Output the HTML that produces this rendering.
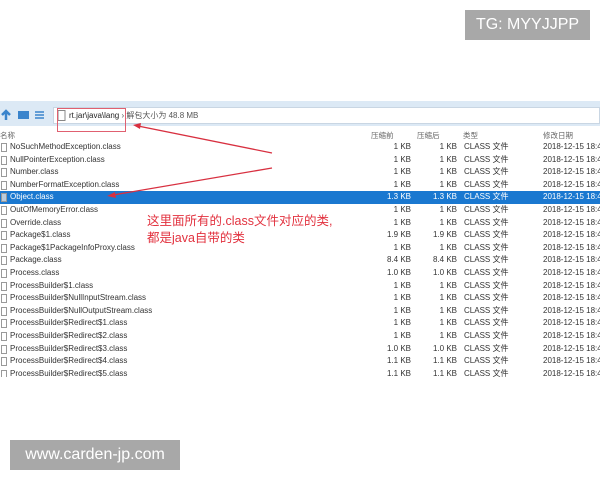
<!DOCTYPE html>
<html><head><meta charset="utf-8"><style>
*{margin:0;padding:0;box-sizing:border-box}
body{width:600px;height:480px;background:#fff;position:relative;overflow:hidden;font-family:"Liberation Sans","Noto Sans CJK SC",sans-serif;color:#333}
.wm{position:absolute;background:#a8a8a8;color:#fff;font-size:16px;display:flex;align-items:center;justify-content:center}
.tb{position:absolute;left:0;top:101px;width:600px;height:25px;background:#dce9f5}
.addr{position:absolute;left:53px;top:107px;width:547px;height:17px;background:#fff;border:1px solid #c9d6e3;font-size:8px;line-height:15px;padding-left:15px;color:#222}
.hdr{position:absolute;top:130px;font-size:7.5px;color:#666}
.row{position:absolute;left:0;width:600px;height:12.6px;font-size:8px;line-height:12.6px;color:#333}
.row .ic{position:absolute;left:1px;top:2px;width:6px;height:9px;border:1px solid #999;background:#fff}
.row .n{position:absolute;left:10px}
.row .a{position:absolute;right:189px}
.row .b{position:absolute;right:143px}
.row .t{position:absolute;left:464px}
.row .d{position:absolute;left:543px;white-space:nowrap}
.sel{background:#1a78d0;color:#fff}
.sel .ic{background:#bcd}
.note{position:absolute;left:147px;top:213px;color:#e2323f;font-size:12.5px;line-height:17px;font-family:"Liberation Sans","Noto Sans CJK SC",sans-serif}
</style></head><body>
<div class="wm" style="left:465px;top:10px;width:125px;height:30px">TG: MYYJJPP</div>
<div class="wm" style="left:10px;top:440px;width:170px;height:30px">www.carden-jp.com</div>
<div class="tb"></div>
<svg style="position:absolute;left:0;top:108px" width="52" height="14">
<path d="M2 7 L6 3 L10 7 M6 3 V12" stroke="#3a84cc" stroke-width="2.5" fill="none"/>
<rect x="18" y="3" width="11" height="8" fill="#3a84cc"/>
<path d="M35 4h9M35 7h9M35 10h9" stroke="#3a84cc" stroke-width="1.5"/>
</svg>
<div class="addr">rt.jar\java\lang <span style="color:#555">› 解包大小为 48.8 MB</span></div>
<svg style="position:absolute;left:57px;top:110px" width="10" height="12"><rect x="1" y="0.5" width="7" height="10" fill="none" stroke="#888"/></svg>
<div class="hdr" style="left:0">名称</div>
<div class="hdr" style="left:371px">压缩前</div>
<div class="hdr" style="left:417px">压缩后</div>
<div class="hdr" style="left:463px">类型</div>
<div class="hdr" style="left:543px">修改日期</div>
<div id="rows"></div>
<div class="row" style="top:141px"><div class="ic"></div><span class="n">NoSuchMethodException.class</span><span class="a">1 KB</span><span class="b">1 KB</span><span class="t">CLASS 文件</span><span class="d">2018-12-15 18:4</span></div>
<div class="row" style="top:153.6px"><div class="ic"></div><span class="n">NullPointerException.class</span><span class="a">1 KB</span><span class="b">1 KB</span><span class="t">CLASS 文件</span><span class="d">2018-12-15 18:4</span></div>
<div class="row" style="top:166.2px"><div class="ic"></div><span class="n">Number.class</span><span class="a">1 KB</span><span class="b">1 KB</span><span class="t">CLASS 文件</span><span class="d">2018-12-15 18:4</span></div>
<div class="row" style="top:178.8px"><div class="ic"></div><span class="n">NumberFormatException.class</span><span class="a">1 KB</span><span class="b">1 KB</span><span class="t">CLASS 文件</span><span class="d">2018-12-15 18:4</span></div>
<div class="row sel" style="top:191.4px"><div class="ic"></div><span class="n">Object.class</span><span class="a">1.3 KB</span><span class="b">1.3 KB</span><span class="t">CLASS 文件</span><span class="d">2018-12-15 18:4</span></div>
<div class="row" style="top:204px"><div class="ic"></div><span class="n">OutOfMemoryError.class</span><span class="a">1 KB</span><span class="b">1 KB</span><span class="t">CLASS 文件</span><span class="d">2018-12-15 18:4</span></div>
<div class="row" style="top:216.6px"><div class="ic"></div><span class="n">Override.class</span><span class="a">1 KB</span><span class="b">1 KB</span><span class="t">CLASS 文件</span><span class="d">2018-12-15 18:4</span></div>
<div class="row" style="top:229.2px"><div class="ic"></div><span class="n">Package$1.class</span><span class="a">1.9 KB</span><span class="b">1.9 KB</span><span class="t">CLASS 文件</span><span class="d">2018-12-15 18:4</span></div>
<div class="row" style="top:241.8px"><div class="ic"></div><span class="n">Package$1PackageInfoProxy.class</span><span class="a">1 KB</span><span class="b">1 KB</span><span class="t">CLASS 文件</span><span class="d">2018-12-15 18:4</span></div>
<div class="row" style="top:254.4px"><div class="ic"></div><span class="n">Package.class</span><span class="a">8.4 KB</span><span class="b">8.4 KB</span><span class="t">CLASS 文件</span><span class="d">2018-12-15 18:4</span></div>
<div class="row" style="top:267px"><div class="ic"></div><span class="n">Process.class</span><span class="a">1.0 KB</span><span class="b">1.0 KB</span><span class="t">CLASS 文件</span><span class="d">2018-12-15 18:4</span></div>
<div class="row" style="top:279.6px"><div class="ic"></div><span class="n">ProcessBuilder$1.class</span><span class="a">1 KB</span><span class="b">1 KB</span><span class="t">CLASS 文件</span><span class="d">2018-12-15 18:4</span></div>
<div class="row" style="top:292.2px"><div class="ic"></div><span class="n">ProcessBuilder$NullInputStream.class</span><span class="a">1 KB</span><span class="b">1 KB</span><span class="t">CLASS 文件</span><span class="d">2018-12-15 18:4</span></div>
<div class="row" style="top:304.8px"><div class="ic"></div><span class="n">ProcessBuilder$NullOutputStream.class</span><span class="a">1 KB</span><span class="b">1 KB</span><span class="t">CLASS 文件</span><span class="d">2018-12-15 18:4</span></div>
<div class="row" style="top:317.4px"><div class="ic"></div><span class="n">ProcessBuilder$Redirect$1.class</span><span class="a">1 KB</span><span class="b">1 KB</span><span class="t">CLASS 文件</span><span class="d">2018-12-15 18:4</span></div>
<div class="row" style="top:330px"><div class="ic"></div><span class="n">ProcessBuilder$Redirect$2.class</span><span class="a">1 KB</span><span class="b">1 KB</span><span class="t">CLASS 文件</span><span class="d">2018-12-15 18:4</span></div>
<div class="row" style="top:342.6px"><div class="ic"></div><span class="n">ProcessBuilder$Redirect$3.class</span><span class="a">1.0 KB</span><span class="b">1.0 KB</span><span class="t">CLASS 文件</span><span class="d">2018-12-15 18:4</span></div>
<div class="row" style="top:355.2px"><div class="ic"></div><span class="n">ProcessBuilder$Redirect$4.class</span><span class="a">1.1 KB</span><span class="b">1.1 KB</span><span class="t">CLASS 文件</span><span class="d">2018-12-15 18:4</span></div>
<div style="position:absolute;left:0;top:367.8px;width:600px;height:9px;overflow:hidden"><div class="row" style="top:0"><div class="ic"></div><span class="n">ProcessBuilder$Redirect$5.class</span><span class="a">1.1 KB</span><span class="b">1.1 KB</span><span class="t">CLASS 文件</span><span class="d">2018-12-15 18:4</span></div></div>
<svg style="position:absolute;left:0;top:0" width="600" height="480">
<rect x="57.5" y="108.5" width="68" height="23" fill="none" stroke="#e06070" stroke-width="1"/>
<line x1="272" y1="153" x2="138" y2="126" stroke="#d83040" stroke-width="1.3"/>
<path d="M133 125 L141 123 L140 129 Z" fill="#d83040"/>
<line x1="272" y1="168" x2="113" y2="195" stroke="#d83040" stroke-width="1.3"/>
<path d="M107 196 L115 192 L116 198 Z" fill="#d83040"/>
</svg>
<div class="note">这里面所有的.class文件对应的类,<br>都是java自带的类</div>
</body></html>
